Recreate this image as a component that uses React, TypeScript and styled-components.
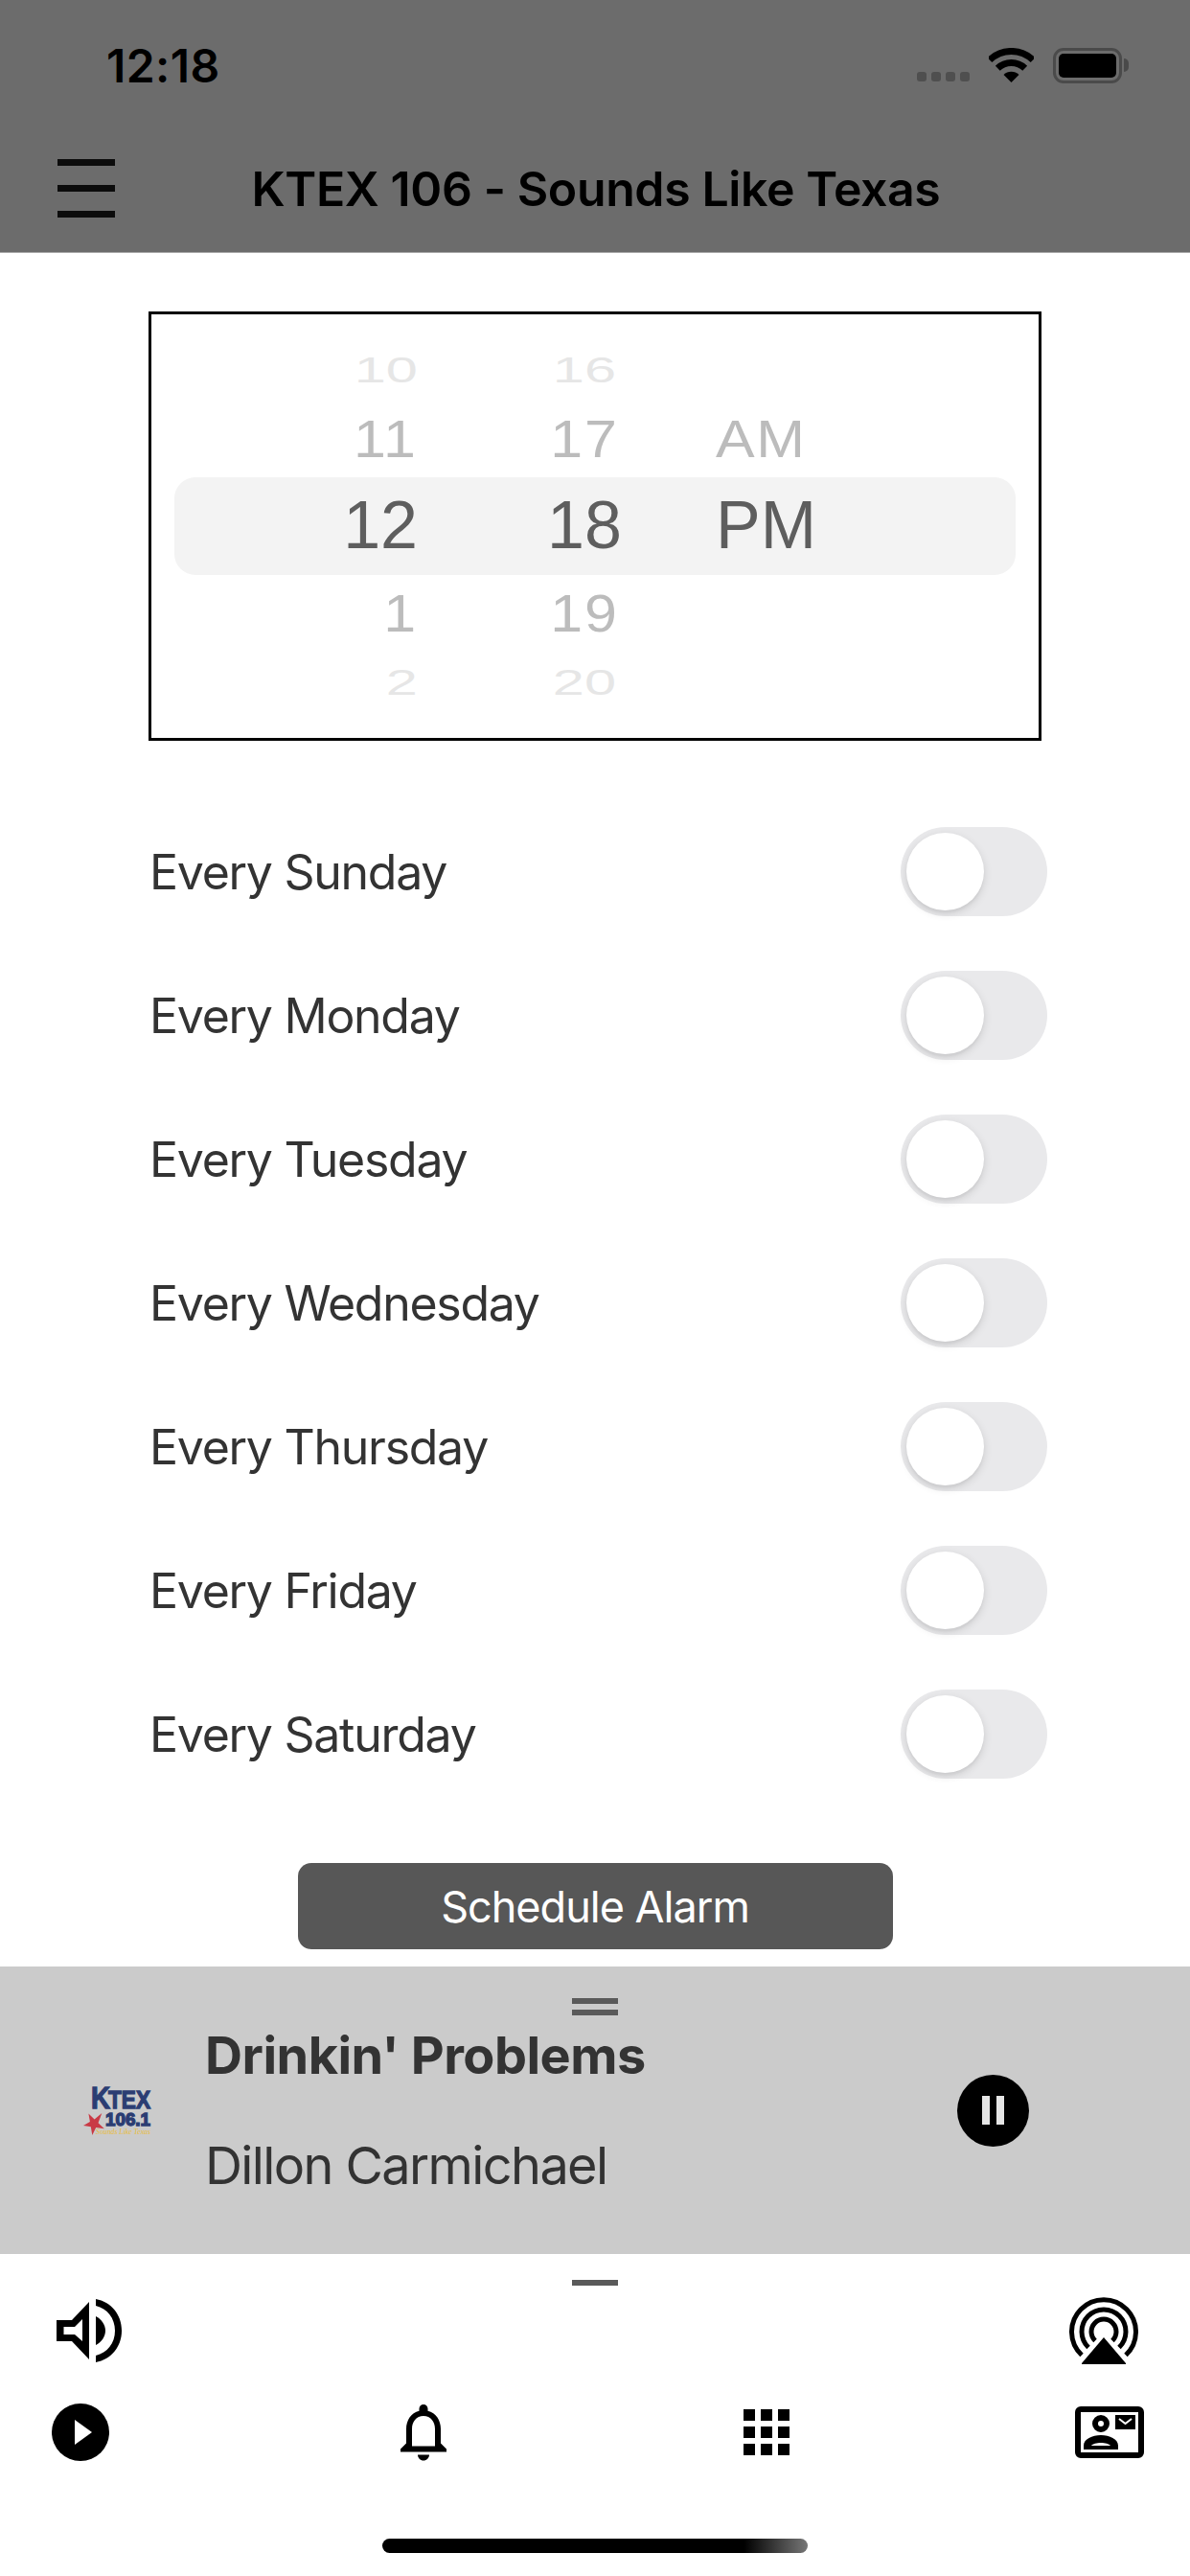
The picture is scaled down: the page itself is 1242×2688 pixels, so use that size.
import styled, { createGlobalStyle } from "styled-components";

const GlobalStyle = createGlobalStyle`
  html, body {
    margin: 0;
    padding: 0;
    background: #fff;
  }
  * {
    box-sizing: border-box;
  }
`;

const Page = styled.div`
  width: 1242px;
  height: 2688px;
  display: flex;
  flex-direction: column;
  overflow: hidden;
  background: #fff;
  color: #333;
  font-family: Inter, "Liberation Sans", sans-serif;
`;

const Header = styled.header`
  height: 264px;
  background: #6c6c6c;
  border-bottom: 1px solid #a8a8a8;
  color: #000;
`;

const StatusBar = styled.div`
  height: 136px;
  display: flex;
  align-items: center;
  padding: 0 71px 0 111px;
`;

const Clock = styled.span`
  font-size: 48px;
  font-weight: 600;
  letter-spacing: 0.4px;
  margin-right: auto;
`;

const SignalDots = styled.div`
  display: flex;
  gap: 5px;
  margin: 24px 20px 0 0;
`;

const SignalDot = styled.i`
  width: 10px;
  height: 10px;
  border-radius: 3px;
  background: #4f4f4f;
`;

const StatusIcon = styled.svg`
  display: block;
`;

const Battery = styled.div`
  position: relative;
  width: 72px;
  height: 37px;
  margin-left: 20px;
  padding: 3px;
  border: 3px solid #4a4a4a;
  border-radius: 11px;

  &::before {
    content: "";
    display: block;
    height: 100%;
    border-radius: 5px;
    background: #000;
  }

  &::after {
    content: "";
    position: absolute;
    top: 8px;
    right: -10px;
    width: 5px;
    height: 14px;
    border-radius: 0 7px 7px 0;
    background: #4a4a4a;
  }
`;

const NavBar = styled.div`
  height: 127px;
  display: flex;
  align-items: center;
  padding: 0 60px 6px;
`;

const MenuButton = styled.div`
  width: 60px;
  height: 61px;
  display: flex;
  flex-direction: column;
  justify-content: space-between;

  i {
    display: block;
    height: 7px;
    background: #0c0c0c;
  }
`;

const Title = styled.h1`
  flex: 1;
  margin: 0 58px 0 0;
  text-align: center;
  font-size: 50px;
  font-weight: 600;
  letter-spacing: -0.4px;
`;

const Main = styled.main`
  flex: 1;
  padding-top: 61px;
  display: flex;
  flex-direction: column;
  align-items: center;
`;

const PickerBox = styled.div`
  position: relative;
  width: 932px;
  height: 448px;
  padding-top: 22px;
  border: 3px solid #000;
  display: grid;
  grid-template-columns: 278px 311px 1fr;
  align-content: start;
  font-family: "Liberation Sans", Arial, sans-serif;
`;

const PickerHighlight = styled.div`
  position: absolute;
  left: 24px;
  right: 24px;
  top: 170px;
  height: 102px;
  border-radius: 22px;
  background: #f3f3f3;
`;

const WheelColumn = styled.div<{ $align: string; $inset: number }>`
  position: relative;
  display: flex;
  flex-direction: column;
  align-items: ${(p) => p.$align};
  padding-left: ${(p) => p.$inset}px;
`;

const WheelCell = styled.div<{ $height: number }>`
  height: ${(p) => p.$height}px;
  display: flex;
  align-items: center;
`;

const tierStyle = [
  "color: #5e5e5e; transform: none;",
  "color: #bcbcbc; letter-spacing: 2px; transform: scale(0.87, 0.8);",
  "color: #e6e6e6; transform: scale(0.85, 0.54);",
];

const WheelText = styled.span<{ $tier: number; $origin: string }>`
  font-size: 70px;
  line-height: 1;
  transform-origin: ${(p) => p.$origin} center;
  ${(p) => tierStyle[p.$tier]}
`;

const DayList = styled.div`
  width: 100%;
  margin-top: 61px;
`;

const DayRow = styled.div`
  height: 150px;
  display: flex;
  align-items: center;
  justify-content: space-between;
  padding: 0 149px 0 156px;
`;

const DayLabel = styled.span`
  margin-top: 2px;
  font-size: 50px;
  letter-spacing: -1.27px;
  color: #333;
`;

const Toggle = styled.div`
  width: 153px;
  height: 93px;
  padding: 6px;
  border-radius: 47px;
  background: #e9e9eb;
`;

const ToggleThumb = styled.div`
  width: 81px;
  height: 81px;
  border-radius: 50%;
  background: #fff;
  box-shadow: 0 3px 10px rgba(0, 0, 0, 0.12), 0 3px 3px rgba(0, 0, 0, 0.04);
`;

const ScheduleButton = styled.button`
  width: 621px;
  height: 90px;
  margin-top: 60px;
  border: 0;
  border-radius: 14px;
  background: #575757;
  color: #fff;
  font-family: inherit;
  font-size: 45px;
  letter-spacing: -1px;
`;

const Player = styled.section`
  position: relative;
  height: 300px;
  background: #cbcbcb;
  display: flex;
  align-items: center;
  padding: 0 168px 0 77px;
`;

const PlayerGrip = styled.div`
  position: absolute;
  top: 33px;
  left: 597px;
  width: 48px;
  height: 18px;
  border-top: 6px solid #5a5a5a;
  border-bottom: 6px solid #5a5a5a;
`;

const StationLogo = styled.svg`
  display: block;
  flex: none;
  width: 90px;
  height: 75px;
  margin-right: 47px;
`;

const TrackInfo = styled.div`
  flex: 1;
`;

const TrackTitle = styled.div`
  font-size: 54px;
  font-weight: 700;
  line-height: 64px;
  letter-spacing: -0.5px;
  color: #333;
`;

const TrackArtist = styled.div`
  margin-top: 51px;
  font-size: 54px;
  line-height: 64px;
  letter-spacing: -1.6px;
  color: #333;
`;

const PauseButton = styled.div`
  width: 75px;
  height: 75px;
  border-radius: 50%;
  background: #000;
  display: flex;
  align-items: center;
  justify-content: center;
  gap: 7px;

  i {
    display: block;
    width: 8px;
    height: 30px;
    background: #e6e6e6;
  }
`;

const BottomNav = styled.nav`
  height: 336px;
  display: flex;
  flex-direction: column;
  align-items: stretch;
`;

const NavHandle = styled.div`
  align-self: center;
  width: 48px;
  height: 6px;
  margin-top: 27px;
  background: #5a5a5a;
`;

const NavTopRow = styled.div`
  height: 72px;
  margin-top: 11px;
  display: flex;
  align-items: center;
  justify-content: space-between;
  padding: 0 54px 0 59px;
`;

const NavTabs = styled.div`
  height: 60px;
  margin-top: 40px;
  display: flex;
  gap: 286px;
  padding-left: 48px;
`;

const NavTab = styled.div`
  width: 72px;
  display: flex;
  align-items: center;
  justify-content: center;
`;

const Icon = styled.svg`
  display: block;
  fill: #000;
`;

const HomeIndicator = styled.div`
  align-self: center;
  width: 444px;
  height: 15px;
  margin-top: 81px;
  border-radius: 8px;
  background: linear-gradient(90deg, #000 0, #000 85%, #777 100%);
`;

const hours = ["10", "11", "12", "1", "2"];
const minutes = ["16", "17", "18", "19", "20"];
const periods = ["", "AM", "PM", "", ""];
const cellHeights = [72, 72, 108, 76, 68];
const cellTiers = [2, 1, 0, 1, 2];
const days = ["Sunday", "Monday", "Tuesday", "Wednesday", "Thursday", "Friday", "Saturday"];

function Wheel({
  values,
  align,
  origin,
  inset = 0,
}: {
  values: string[];
  align: string;
  origin: string;
  inset?: number;
}) {
  return (
    <WheelColumn $align={align} $inset={inset}>
      {values.map((value, i) => (
        <WheelCell key={i} $height={cellHeights[i]}>
          <WheelText $tier={cellTiers[i]} $origin={origin}>
            {value}
          </WheelText>
        </WheelCell>
      ))}
    </WheelColumn>
  );
}

export default function App() {
  return (
    <Page>
      <GlobalStyle />
      <Header>
        <StatusBar>
          <Clock>12:18</Clock>
          <SignalDots>
            <SignalDot />
            <SignalDot />
            <SignalDot />
            <SignalDot />
          </SignalDots>
          <StatusIcon width="47" height="36" viewBox="0 0 47 36">
            <path d="M0.9 12.6A32.5 32.5 0 0 1 46.1 12.6" fill="none" stroke="#000" strokeWidth="7" />
            <path d="M9.3 21.3A20.5 20.5 0 0 1 37.7 21.3" fill="none" stroke="#000" strokeWidth="7" />
            <path d="M23.5 36L15.5 28A11.5 11.5 0 0 1 31.5 28Z" fill="#000" />
          </StatusIcon>
          <Battery />
        </StatusBar>
        <NavBar>
          <MenuButton>
            <i />
            <i />
            <i />
          </MenuButton>
          <Title>KTEX 106 - Sounds Like Texas</Title>
        </NavBar>
      </Header>

      <Main>
        <PickerBox>
          <PickerHighlight />
          <Wheel values={hours} align="flex-end" origin="right" />
          <Wheel values={minutes} align="center" origin="center" inset={37} />
          <Wheel values={periods} align="flex-start" origin="left" />
        </PickerBox>

        <DayList>
          {days.map((day) => (
            <DayRow key={day}>
              <DayLabel>Every {day}</DayLabel>
              <Toggle>
                <ToggleThumb />
              </Toggle>
            </DayRow>
          ))}
        </DayList>

        <ScheduleButton>Schedule Alarm</ScheduleButton>
      </Main>

      <Player>
        <PlayerGrip />
        <StationLogo viewBox="-10 -11 90 75">
          <g fontFamily="'Liberation Sans', sans-serif" fontWeight="700" fill="#2b3d73" stroke="#2b3d73" strokeWidth="1.3">
            <text x="8" y="24" fontSize="32" textLength="20" lengthAdjust="spacingAndGlyphs">K</text>
            <text x="26" y="24" fontSize="25" textLength="44" lengthAdjust="spacingAndGlyphs">TEX</text>
            <text x="23" y="42" fontSize="18" textLength="47" lengthAdjust="spacingAndGlyphs">106.1</text>
          </g>
          <polygon points="0,42 7.8,43.3 9.3,51.9 13.2,44.1 21.8,45.3 15.5,39.2 19.3,29 11.6,35.4 5.4,29.4 6.9,38" fill="#c93a45" />
          <text x="13" y="51" fontSize="9" fontStyle="italic" fontFamily="'Liberation Serif', serif" fill="#e8bd3f" textLength="57" lengthAdjust="spacingAndGlyphs">Sounds Like Texas</text>
        </StationLogo>
        <TrackInfo>
          <TrackTitle>Drinkin' Problems</TrackTitle>
          <TrackArtist>Dillon Carmichael</TrackArtist>
        </TrackInfo>
        <PauseButton>
          <i />
          <i />
        </PauseButton>
      </Player>

      <BottomNav>
        <NavHandle />
        <NavTopRow>
          <Icon width="68" height="66" viewBox="0 0 68 66">
            <path fillRule="evenodd" d="M0 22H16L34 3V63L16 44H0ZM7.5 29V37H19L27 44V21L19 29Z" />
            <path d="M41 18C47 21 51 27 51 33C51 39 47 45 41 48Z" />
            <path d="M41 0C57 3 68 16 68 33C68 50 57 63 41 66V59C53 56 61 46 61 33C61 20 53 10 41 7Z" />
          </Icon>
          <Icon width="72" height="70" viewBox="0 0 72 70">
            <g fill="none" stroke="#000" strokeWidth="5">
              <path d="M13 60.5A33.5 33.5 0 1 1 59 60.5" />
              <path d="M20 52.5A23 23 0 1 1 52 52.5" />
              <path d="M27 45.5A13 13 0 1 1 45 45.5" />
            </g>
            <path d="M36 42L59 69V70H13V69Z" />
          </Icon>
        </NavTopRow>
        <NavTabs>
          <NavTab>
            <Icon width="60" height="60" viewBox="0 0 60 60">
              <circle cx="30" cy="30" r="30" />
              <path d="M24 17L42 30L24 43Z" fill="#fff" />
            </Icon>
          </NavTab>
          <NavTab>
            <Icon width="48" height="59" viewBox="4 2.5 16 19.6">
              <path d="M12 22c1.1 0 2-.9 2-2h-4c0 1.1.9 2 2 2zm6-6v-5c0-3.07-1.63-5.64-4.5-6.32V4c0-.83-.67-1.5-1.5-1.5s-1.5.67-1.5 1.5v.68C7.64 5.36 6 7.92 6 11v5l-2 2v1h16v-1l-2-2zm-2 1H8v-6c0-2.48 1.51-4.5 4-4.5s4 2.02 4 4.5v6z" />
            </Icon>
          </NavTab>
          <NavTab>
            <Icon width="48" height="48" viewBox="4 4 16 16">
              <path d="M4 8h4V4H4v4zm6 12h4v-4h-4v4zm-6 0h4v-4H4v4zm0-6h4v-4H4v4zm6 0h4v-4h-4v4zm6-10v4h4V4h-4zm-6 4h4V4h-4v4zm6 6h4v-4h-4v4zm0 6h4v-4h-4v4z" />
            </Icon>
          </NavTab>
          <NavTab>
            <Icon width="72" height="54" viewBox="0 0 72 54">
              <rect x="3" y="3" width="66" height="48" rx="3" fill="none" stroke="#000" strokeWidth="6" />
              <path fillRule="evenodd" d="M27 9a9 9 0 1 0 0 18a9 9 0 1 0 0-18zM27 15a3 3 0 1 1 0 6a3 3 0 1 1 0-6z" />
              <path fillRule="evenodd" d="M9 45V41C9 34 18 30 27 30C36 30 45 34 45 41V45ZM17 41H37C34 37 20 37 17 41Z" />
              <rect x="42" y="9" width="21" height="15" />
              <path d="M46 13L52.5 18L59 13" fill="none" stroke="#fff" strokeWidth="2" />
            </Icon>
          </NavTab>
        </NavTabs>
        <HomeIndicator />
      </BottomNav>
    </Page>
  );
}
